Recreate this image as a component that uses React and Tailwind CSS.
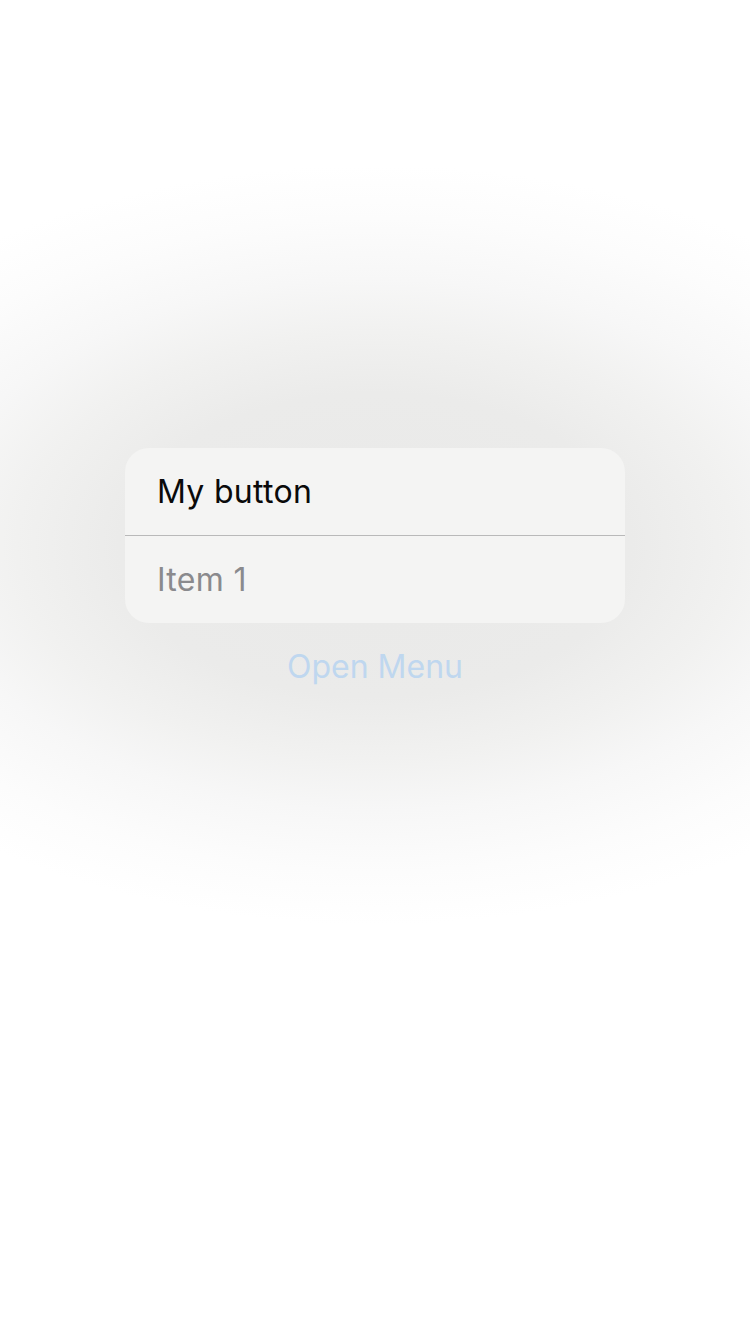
export default function App() {
  return (
    <div
      className="w-[750px] h-[1334px] overflow-hidden flex flex-col items-center pt-[448px] bg-[radial-gradient(ellipse_640px_380px_at_375px_545px,#e9e9e8_0%,#ebebea_40%,#f1f1f0_56%,#f7f7f7_70%,#fcfcfc_86%,#ffffff_100%)]"
      style={{ fontFamily: 'Inter, "Noto Sans", sans-serif' }}
    >
      <div className="w-[500px] rounded-[24px] bg-[#f4f4f3] overflow-hidden">
        <div className="h-[87px] flex items-center px-[32px] text-[32px] text-[#0a0a0a] tracking-[0.3px]">My button</div>
        <div className="h-px bg-[#b9b9b9]" />
        <div className="h-[87px] flex items-center px-[32px] text-[32px] text-[#8a8a8d] tracking-[0.3px]">Item 1</div>
      </div>
      <div className="mt-[24px] text-[32px] text-[#bfd7ef] leading-[40px]">Open Menu</div>
    </div>
  );
}
